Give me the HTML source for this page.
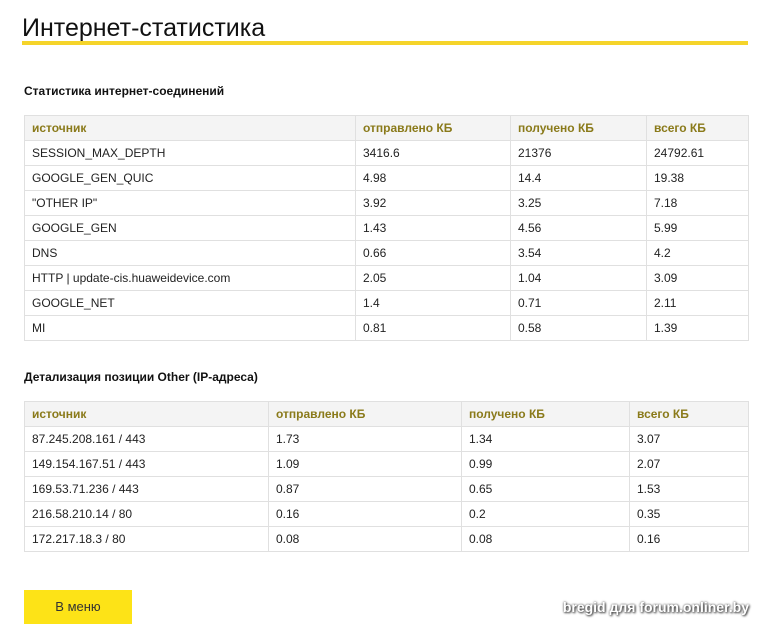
<!DOCTYPE html>
<html><head><meta charset="utf-8"><style>
*{margin:0;padding:0;box-sizing:border-box}
body{width:771px;height:632px;background:#fff;font-family:"Liberation Sans",sans-serif;color:#222;position:relative;overflow:hidden}
h1{position:absolute;left:22px;top:14px;font-weight:normal;font-size:25px;color:#111}
.line{position:absolute;left:22px;top:41px;width:726px;height:4px;background:#f5d42a}
h2{position:absolute;left:24px;font-size:12px;font-weight:bold;color:#111}
table{position:absolute;left:24px;width:725px;border-collapse:collapse;font-size:12px}
td,th{border:1px solid #e0e0e0;height:25px;padding:0 7px;text-align:left;font-weight:normal}
th{background:#f4f4f4;color:#8a7a1a;font-weight:bold}
.btn{position:absolute;left:24px;top:590px;width:108px;height:34px;background:#fde317;color:#333;font-size:13px;line-height:34px;text-align:center}
.wm{position:absolute;right:22px;top:599px;color:#fff;font-weight:bold;font-size:14px;text-shadow:0 0 2px #444,1px 1px 2px #333}
</style></head><body>
<h1>Интернет-статистика</h1>
<div class="line"></div>
<h2 style="top:84px">Статистика интернет-соединений</h2>
<table style="top:115px">
<colgroup><col style="width:331px"><col style="width:155px"><col style="width:136px"><col></colgroup>
<tr><th>источник</th><th>отправлено КБ</th><th>получено КБ</th><th>всего КБ</th></tr>
<tr><td>SESSION_MAX_DEPTH</td><td>3416.6</td><td>21376</td><td>24792.61</td></tr>
<tr><td>GOOGLE_GEN_QUIC</td><td>4.98</td><td>14.4</td><td>19.38</td></tr>
<tr><td>"OTHER IP"</td><td>3.92</td><td>3.25</td><td>7.18</td></tr>
<tr><td>GOOGLE_GEN</td><td>1.43</td><td>4.56</td><td>5.99</td></tr>
<tr><td>DNS</td><td>0.66</td><td>3.54</td><td>4.2</td></tr>
<tr><td>HTTP | update-cis.huaweidevice.com</td><td>2.05</td><td>1.04</td><td>3.09</td></tr>
<tr><td>GOOGLE_NET</td><td>1.4</td><td>0.71</td><td>2.11</td></tr>
<tr><td>MI</td><td>0.81</td><td>0.58</td><td>1.39</td></tr>
</table>
<h2 style="top:370px">Детализация позиции Other (IP-адреса)</h2>
<table style="top:401px">
<colgroup><col style="width:244px"><col style="width:193px"><col style="width:168px"><col></colgroup>
<tr><th>источник</th><th>отправлено КБ</th><th>получено КБ</th><th>всего КБ</th></tr>
<tr><td>87.245.208.161 / 443</td><td>1.73</td><td>1.34</td><td>3.07</td></tr>
<tr><td>149.154.167.51 / 443</td><td>1.09</td><td>0.99</td><td>2.07</td></tr>
<tr><td>169.53.71.236 / 443</td><td>0.87</td><td>0.65</td><td>1.53</td></tr>
<tr><td>216.58.210.14 / 80</td><td>0.16</td><td>0.2</td><td>0.35</td></tr>
<tr><td>172.217.18.3 / 80</td><td>0.08</td><td>0.08</td><td>0.16</td></tr>
</table>
<div class="btn">В меню</div>
<div class="wm">bregid для forum.onliner.by</div>
</body></html>
